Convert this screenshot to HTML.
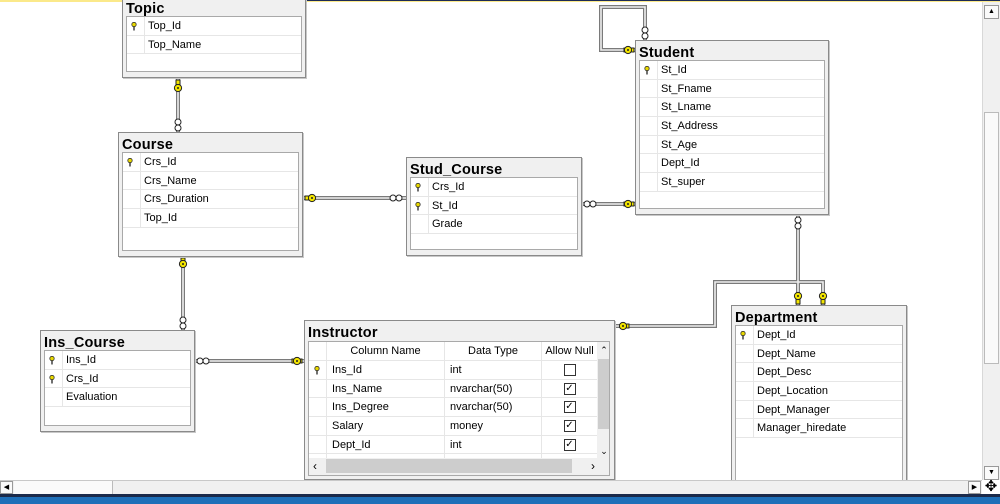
<!DOCTYPE html>
<html><head><meta charset="utf-8"><style>
*{box-sizing:border-box;margin:0;padding:0}
body{width:1000px;height:504px;overflow:hidden;background:#fff;position:relative;font-family:"Liberation Sans",Arial,sans-serif;font-size:11px;color:#000}
.t{position:absolute;border:1px solid #8a8a8a;background:#f0f0f0;box-shadow:1px 1px 0 #c8c8c8}
.h{position:absolute;left:3px;top:4px;font-weight:bold;font-size:14.5px;line-height:17px;letter-spacing:0.2px}
.g{position:absolute;left:3px;right:3px;top:19px;bottom:5px;background:#fff;border:1px solid #a9a9a9}
.r{height:18.7px;line-height:19.5px;border-bottom:1px solid #e6e6e6;position:relative;padding-left:21px;white-space:nowrap}
.r::before{content:"";position:absolute;left:17px;top:0;bottom:-1px;border-left:1px solid #e6e6e6}
.k{position:absolute;left:4px;top:5px}
svg.ln{position:absolute;left:0;top:0}
</style></head><body>
<div style="position:absolute;left:0;top:0;width:230px;height:2px;background:#fbe98a"></div>
<div style="position:absolute;left:230px;top:0;width:770px;height:1px;background:#1c2a55"></div>
<div style="position:absolute;left:230px;top:1px;width:770px;height:1px;background:#fbe98a"></div>

<svg class="ln" width="1000" height="504">
<defs>
<g id="key"><circle cx="0" cy="0" r="3.6" fill="#f3e500" stroke="#222" stroke-width="1"/><circle cx="0" cy="0" r="1" fill="#222"/></g>
</defs>
<g fill="none" stroke="#7a7a7a" stroke-width="4">
<path d="M178 78V132"/><path d="M303 198H406"/><path d="M582 204H635"/><path d="M183 257V330"/><path d="M195 361H304"/>
<path d="M645 40V7H601V50H635"/><path d="M798 215V305"/><path d="M615 326H715V282H823V305"/>
</g>
<g fill="none" stroke="#eee" stroke-width="1.6">
<path d="M178 78V132"/><path d="M303 198H406"/><path d="M582 204H635"/><path d="M183 257V330"/><path d="M195 361H304"/>
<path d="M645 40V7H601V50H635"/><path d="M798 215V305"/><path d="M615 326H715V282H823V305"/>
</g>
<g fill="#fff" stroke="#222" stroke-width="1">
<circle cx="178" cy="122" r="3"/><circle cx="178" cy="128" r="3"/>
<circle cx="393" cy="198" r="3"/><circle cx="399" cy="198" r="3"/>
<circle cx="587" cy="204" r="3"/><circle cx="593" cy="204" r="3"/>
<circle cx="183" cy="320" r="3"/><circle cx="183" cy="326" r="3"/>
<circle cx="200" cy="361" r="3"/><circle cx="206" cy="361" r="3"/>
<circle cx="645" cy="30" r="3"/><circle cx="645" cy="36" r="3"/>
<circle cx="798" cy="220" r="3"/><circle cx="798" cy="226" r="3"/>
</g>
<g fill="#f3e500" stroke="#222" stroke-width="1">
<rect x="176" y="80" width="4" height="6"/><rect x="305" y="196" width="6" height="4"/><rect x="624" y="202" width="10" height="4"/>
<rect x="181" y="258" width="4" height="6"/><rect x="292" y="359" width="10" height="4"/><rect x="624" y="48" width="10" height="4"/>
<rect x="796" y="296" width="4" height="8"/><rect x="621" y="324" width="8" height="4"/><rect x="821" y="296" width="4" height="8"/>
</g>
<use href="#key" x="178" y="88"/><use href="#key" x="312" y="198"/><use href="#key" x="628" y="204"/>
<use href="#key" x="183" y="264"/><use href="#key" x="297" y="361"/><use href="#key" x="628" y="50"/>
<use href="#key" x="798" y="296"/><use href="#key" x="623" y="326"/><use href="#key" x="823" y="296"/>
</svg>

<!-- Topic -->
<div class="t" style="left:122px;top:-4px;width:184px;height:82px"><div class="h">Topic</div><div class="g">
<div class="r"><svg class="k" width="6" height="9"><circle cx="3" cy="2.5" r="2.2" fill="#e8d800" stroke="#333" stroke-width=".8"/><rect x="2.3" y="4.5" width="1.4" height="4" fill="#333"/></svg>Top_Id</div>
<div class="r">Top_Name</div></div></div>

<!-- Course -->
<div class="t" style="left:118px;top:132px;width:185px;height:125px"><div class="h">Course</div><div class="g">
<div class="r"><svg class="k" width="6" height="9"><circle cx="3" cy="2.5" r="2.2" fill="#e8d800" stroke="#333" stroke-width=".8"/><rect x="2.3" y="4.5" width="1.4" height="4" fill="#333"/></svg>Crs_Id</div>
<div class="r">Crs_Name</div><div class="r">Crs_Duration</div><div class="r">Top_Id</div></div></div>

<!-- Stud_Course -->
<div class="t" style="left:406px;top:157px;width:176px;height:99px"><div class="h">Stud_Course</div><div class="g">
<div class="r"><svg class="k" width="6" height="9"><circle cx="3" cy="2.5" r="2.2" fill="#e8d800" stroke="#333" stroke-width=".8"/><rect x="2.3" y="4.5" width="1.4" height="4" fill="#333"/></svg>Crs_Id</div>
<div class="r"><svg class="k" width="6" height="9"><circle cx="3" cy="2.5" r="2.2" fill="#e8d800" stroke="#333" stroke-width=".8"/><rect x="2.3" y="4.5" width="1.4" height="4" fill="#333"/></svg>St_Id</div>
<div class="r">Grade</div></div></div>

<!-- Student -->
<div class="t" style="left:635px;top:40px;width:194px;height:175px"><div class="h">Student</div><div class="g">
<div class="r"><svg class="k" width="6" height="9"><circle cx="3" cy="2.5" r="2.2" fill="#e8d800" stroke="#333" stroke-width=".8"/><rect x="2.3" y="4.5" width="1.4" height="4" fill="#333"/></svg>St_Id</div>
<div class="r">St_Fname</div><div class="r">St_Lname</div><div class="r">St_Address</div><div class="r">St_Age</div><div class="r">Dept_Id</div><div class="r">St_super</div></div></div>

<!-- Ins_Course -->
<div class="t" style="left:40px;top:330px;width:155px;height:102px"><div class="h">Ins_Course</div><div class="g">
<div class="r"><svg class="k" width="6" height="9"><circle cx="3" cy="2.5" r="2.2" fill="#e8d800" stroke="#333" stroke-width=".8"/><rect x="2.3" y="4.5" width="1.4" height="4" fill="#333"/></svg>Ins_Id</div>
<div class="r"><svg class="k" width="6" height="9"><circle cx="3" cy="2.5" r="2.2" fill="#e8d800" stroke="#333" stroke-width=".8"/><rect x="2.3" y="4.5" width="1.4" height="4" fill="#333"/></svg>Crs_Id</div>
<div class="r">Evaluation</div></div></div>

<!-- Department -->
<div class="t" style="left:731px;top:305px;width:176px;height:190px"><div class="h">Department</div><div class="g">
<div class="r"><svg class="k" width="6" height="9"><circle cx="3" cy="2.5" r="2.2" fill="#e8d800" stroke="#333" stroke-width=".8"/><rect x="2.3" y="4.5" width="1.4" height="4" fill="#333"/></svg>Dept_Id</div>
<div class="r">Dept_Name</div><div class="r">Dept_Desc</div><div class="r">Dept_Location</div><div class="r">Dept_Manager</div><div class="r">Manager_hiredate</div></div></div>

<!-- Instructor -->
<div class="t" style="left:304px;top:320px;width:311px;height:160px"><div class="h">Instructor</div>
<div style="position:absolute;left:3px;top:20px;width:302px;height:135px;background:#fff;border:1px solid #a9a9a9;overflow:hidden">
<div style="position:absolute;left:0;top:0;width:288px">
<div style="height:19px;line-height:19px;display:flex;border-bottom:1px solid #e6e6e6">
<div style="width:18px;border-right:1px solid #e6e6e6"></div>
<div style="width:118px;text-align:center;border-right:1px solid #e6e6e6">Column Name</div>
<div style="width:97px;text-align:center;border-right:1px solid #e6e6e6">Data Type</div>
<div style="width:55px;text-align:center;white-space:nowrap;overflow:hidden">Allow Null</div></div>
<div id="rows"></div>
</div>
<div style="position:absolute;left:288px;top:0;width:14px;height:116px;background:#f0f0f0">
<div style="text-align:center;font-size:9px;line-height:16px">&#8963;</div>
<div style="position:absolute;left:1px;top:17px;width:12px;height:70px;background:#cdcdcd"></div>
<div style="position:absolute;bottom:0;width:14px;text-align:center;font-size:9px;line-height:14px">&#8964;</div></div>
<div style="position:absolute;left:0;top:116px;width:302px;height:17px;background:#f0f0f0">
<div style="position:absolute;left:4px;top:1px;font-size:12px">&lsaquo;</div>
<div style="position:absolute;left:17px;top:1px;width:246px;height:14px;background:#cdcdcd"></div>
<div style="position:absolute;left:282px;top:1px;font-size:12px">&rsaquo;</div></div>
</div></div>

<!-- scrollbars -->
<div style="position:absolute;left:982px;top:2px;width:18px;height:478px;background:#f0f0f0;border-left:1px solid #d8d8d8">
<div style="position:absolute;left:1px;top:3px;width:15px;height:14px;background:#fafafa;border:1px solid #999;font-size:7px;text-align:center;line-height:12px">&#9650;</div>
<div style="position:absolute;left:1px;top:110px;width:15px;height:252px;background:#fafafa;border:1px solid #bbb"></div>
<div style="position:absolute;left:1px;top:464px;width:15px;height:14px;background:#fafafa;border:1px solid #999;font-size:7px;text-align:center;line-height:12px">&#9660;</div></div>
<div style="position:absolute;left:0;top:480px;width:982px;height:14px;background:#f0f0f0;border-top:1px solid #c8c8c8">
<div style="position:absolute;left:0;top:0;width:13px;height:13px;border:1px solid #999;background:#fafafa;font-size:7px;line-height:11px;text-align:center">&#9664;</div>
<div style="position:absolute;left:14px;top:0;width:99px;height:13px;background:#fafafa;border-right:1px solid #bbb"></div>
<div style="position:absolute;left:968px;top:0;width:13px;height:13px;border:1px solid #999;background:#fafafa;font-size:7px;line-height:11px;text-align:center">&#9654;</div></div>
<div style="position:absolute;left:982px;top:480px;width:18px;height:14px;background:#fff;font-size:15px;line-height:14px;text-align:center">&#10021;</div>
<div style="position:absolute;left:0;top:494px;width:1000px;height:3px;background:#1b2a4a"></div>
<div style="position:absolute;left:0;top:497px;width:1000px;height:7px;background:#1e6fb8"></div>

<script>
var d=[["Ins_Id","int",0,1],["Ins_Name","nvarchar(50)",1],["Ins_Degree","nvarchar(50)",1],["Salary","money",1],["Dept_Id","int",1],["","",0]];
var h="";d.forEach(function(r){
var cb='<span style="display:inline-block;width:12px;height:12px;border:1px solid #333;vertical-align:middle;font-size:10px;line-height:10px;text-align:center">'+(r[2]?'&#10003;':'')+'</span>';
h+='<div style="height:18.7px;line-height:18.7px;display:flex;border-bottom:1px solid #e6e6e6"><div style="width:18px;border-right:1px solid #e6e6e6;position:relative">'+(r[3]?'<svg style="position:absolute;left:5px;top:5px" width="6" height="9"><circle cx="3" cy="2.5" r="2.2" fill="#e8d800" stroke="#333" stroke-width=".8"/><rect x="2.3" y="4.5" width="1.4" height="4" fill="#333"/></svg>':'')+'</div><div style="width:118px;padding-left:5px;border-right:1px solid #e6e6e6">'+r[0]+'</div><div style="width:97px;padding-left:5px;border-right:1px solid #e6e6e6">'+r[1]+'</div><div style="width:55px;text-align:center">'+cb+'</div></div>';});
document.getElementById("rows").innerHTML=h;
</script>
</body></html>
